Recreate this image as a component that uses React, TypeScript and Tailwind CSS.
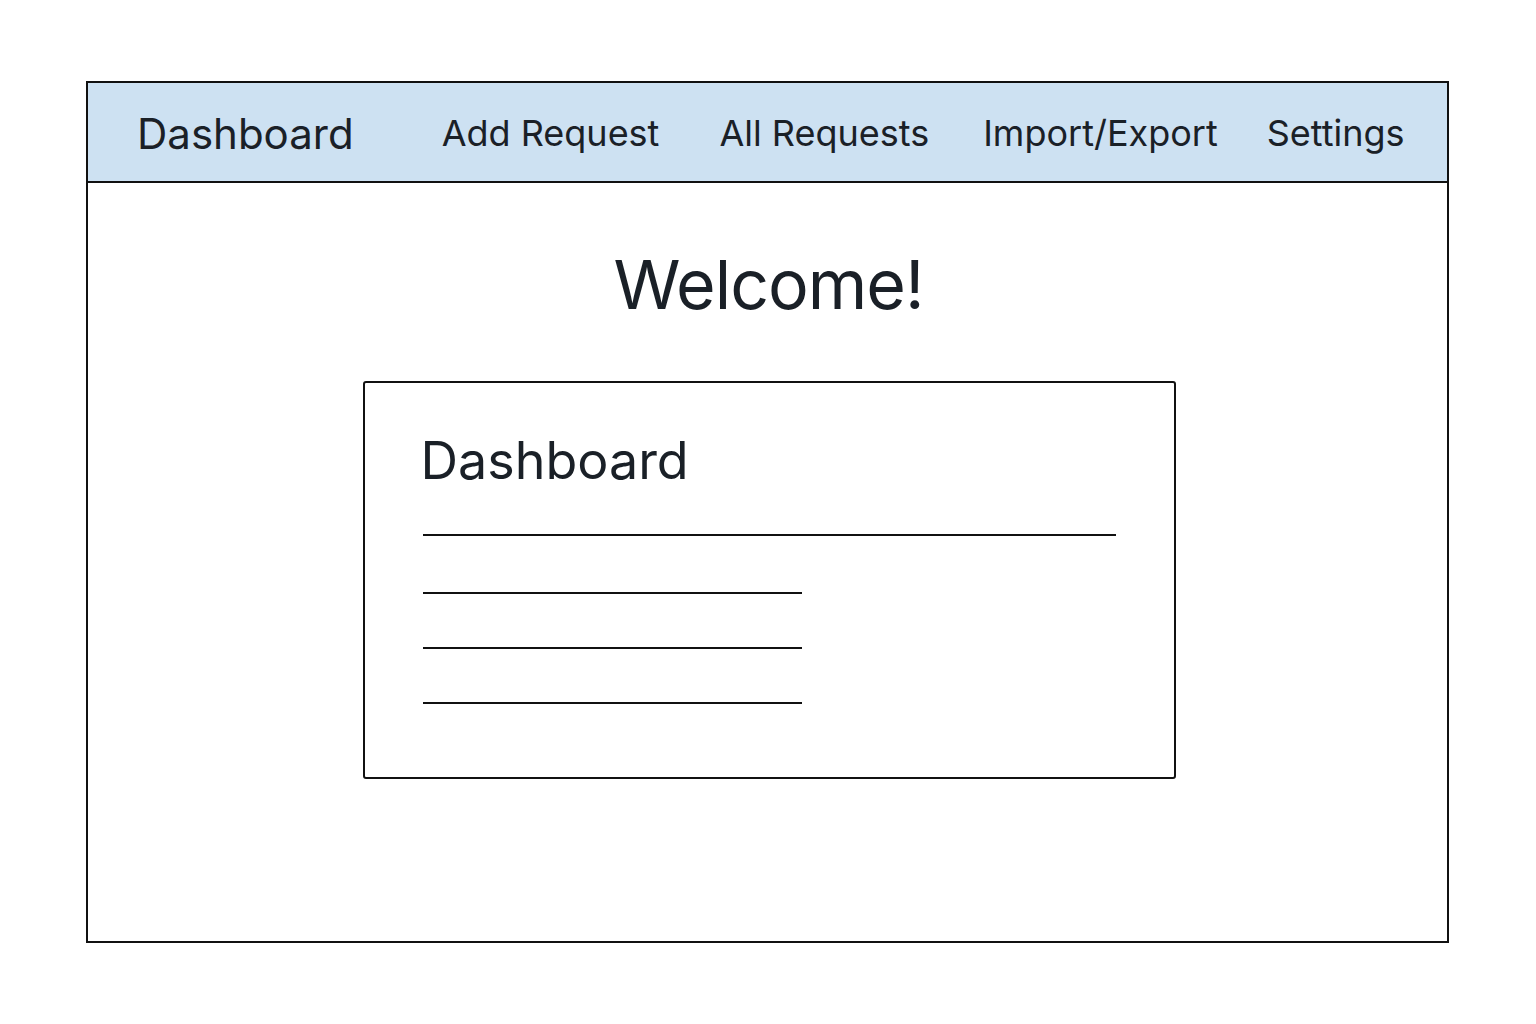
import React from 'react';

const navItems = [
  { label: 'Add Request', gap: 'ml-[0px]' },
  { label: 'All Requests', gap: 'ml-[60px]' },
  { label: 'Import/Export', gap: 'ml-[54px]' },
  { label: 'Settings', gap: 'ml-[49px]' },
];

export default function App() {
  return (
    <div className="min-h-screen w-full bg-white pt-[81px] font-['Inter',sans-serif] text-[#1a2027]">
      <div className="ml-[86px] flex h-[862px] w-[1363px] flex-col border-2 border-[#111]">
        {/* Top navigation */}
        <nav className="flex h-[100px] items-center border-b-2 border-[#111] bg-[#cde1f2] pl-[49px]">
          <span className="pt-[3px] text-[42px] leading-none">Dashboard</span>
          <div className="ml-[88px] flex items-center pt-[1px]">
            {navItems.map((item) => (
              <span key={item.label} className={`${item.gap} text-[36px] leading-none`}>
                {item.label}
              </span>
            ))}
          </div>
        </nav>

        {/* Main content */}
        <main className="flex flex-1 flex-col items-center">
          <h1 className="ml-[2px] mt-[67px] text-[68px] leading-none tracking-[-1px]">Welcome!</h1>

          <section className="ml-[3px] mt-[63px] h-[398px] w-[813px] rounded-[3px] border-2 border-[#111] pl-[56px] pr-[58px] pt-[52px]">
            <h2 className="text-[52px] leading-none">Dashboard</h2>
            <div className="ml-[2px] mt-[47px] h-[2px] w-[693px] bg-[#111]" />
            <div className="ml-[2px] mt-[56px] flex flex-col gap-[53px]">
              <div className="h-[2px] w-[379px] bg-[#111]" />
              <div className="h-[2px] w-[379px] bg-[#111]" />
              <div className="h-[2px] w-[379px] bg-[#111]" />
            </div>
          </section>
        </main>
      </div>
    </div>
  );
}
